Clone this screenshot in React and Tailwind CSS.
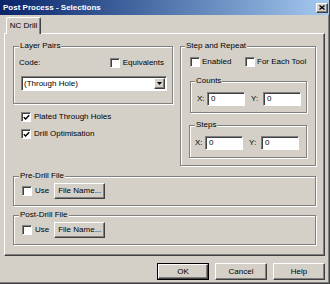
import React from "react";

function Check({ checked }) {
  return (
    <span className="w-[10px] h-[10px] shrink-0 bg-white border border-t-[#808080] border-l-[#808080] border-r-white border-b-white shadow-[inset_1px_1px_0_#404040] flex items-center justify-center">
      {checked && (
        <svg width="7" height="7" viewBox="0 0 7 7">
          <path d="M0.8 3.2 L2.6 5 L6.2 1.2" fill="none" stroke="#000" strokeWidth="1.4" />
        </svg>
      )}
    </span>
  );
}

function Group({ label, labelLeft, className, children }) {
  return (
    <div className={"relative border border-[#808080] shadow-[inset_1px_1px_0_#fff,1px_1px_0_#fff] " + className}>
      <span className={"absolute -top-[6px] px-[1px] bg-[#d4d0c8] leading-[10px] " + labelLeft}>{label}</span>
      {children}
    </div>
  );
}

function Input({ className }) {
  return (
    <div className={"h-[14px] bg-white border border-t-[#808080] border-l-[#808080] border-r-white border-b-white shadow-[inset_1px_1px_0_#404040] flex items-center pl-[3px] " + className}>
      0
    </div>
  );
}

function Btn({ children, className }) {
  return (
    <div className={"bg-[#d4d0c8] border border-t-white border-l-white border-r-[#404040] border-b-[#404040] shadow-[inset_-1px_-1px_0_#808080] flex items-center justify-center " + className}>
      {children}
    </div>
  );
}

export default function App() {
  return (
    <div className="w-[330px] h-[284px] bg-[#d4d0c8] border-r border-b border-[#404040] shadow-[inset_-1px_-1px_0_#808080] flex flex-col text-[8px] leading-none text-black font-['Liberation_Sans',Arial,sans-serif]">
      {/* title bar */}
      <div className="h-[15px] bg-linear-to-r from-[#0a246a] to-[#a6caf0] flex items-center justify-between pl-[3px] pr-[1px] shrink-0">
        <span className="text-white font-bold text-[8px]">Post Process - Selections</span>
        <Btn className="w-[12px] h-[10px]">
          <svg width="6" height="5" viewBox="0 0 6 5">
            <path d="M0.5 0.5 L5.5 4.5 M5.5 0.5 L0.5 4.5" stroke="#000" strokeWidth="1.3" />
          </svg>
        </Btn>
      </div>

      {/* tab */}
      <div className="mt-[2px] h-[16px] pl-[6px] shrink-0">
        <div className="relative z-10 w-[35px] h-[17px] bg-[#d4d0c8] border-t border-l border-white border-r border-r-[#404040] rounded-t-[2px] shadow-[inset_-1px_0_0_#808080] flex items-center justify-center pb-[1px]">
          NC Drill
        </div>
      </div>

      {/* panel */}
      <div className="ml-[4px] w-[321px] h-[223px] shrink-0 border border-t-white border-l-white border-r-[#404040] border-b-[#404040] shadow-[inset_-1px_-1px_0_#808080] pt-[12px] pl-[8px] flex flex-col">
        <div className="flex gap-[7px]">
          {/* left column */}
          <div className="w-[160px] flex flex-col">
            <Group label="Layer Pairs" labelLeft="left-[5px]" className="h-[58px] pt-[11px] pl-[5px] pr-[8px]">
              <div className="flex items-center h-[10px]">
                <span>Code:</span>
                <div className="ml-auto flex items-center gap-[3px]">
                  <Check />
                  <span>Equivalents</span>
                </div>
              </div>
              <div className="mt-[8px] ml-[2px] w-[146px] h-[15px] bg-white border border-t-[#808080] border-l-[#808080] border-r-white border-b-white shadow-[inset_1px_1px_0_#404040] flex items-center pl-[2px] pr-[1px]">
                <span>(Through Hole)</span>
                <Btn className="ml-auto w-[11px] h-[11px]">
                  <svg width="5" height="3" viewBox="0 0 5 3">
                    <path d="M0 0 L5 0 L2.5 3 Z" fill="#000" />
                  </svg>
                </Btn>
              </div>
            </Group>
            <div className="mt-[8px] pl-[8px] flex items-center gap-[3px] h-[10px]">
              <Check checked />
              <span>Plated Through Holes</span>
            </div>
            <div className="mt-[7px] pl-[8px] flex items-center gap-[3px] h-[10px]">
              <Check checked />
              <span>Drill Optimisation</span>
            </div>
          </div>

          {/* right column */}
          <Group label="Step and Repeat" labelLeft="left-[4px]" className="w-[136px] h-[120px] pt-[10px] pl-[9px]">
            <div className="flex items-center h-[10px]">
              <div className="w-[55px] flex items-center gap-[2px]">
                <Check />
                <span>Enabled</span>
              </div>
              <div className="flex items-center gap-[2px]">
                <Check />
                <span>For Each Tool</span>
              </div>
            </div>
            <Group label="Counts" labelLeft="left-[4px]" className="mt-[14px] w-[117px] h-[32px] pt-[10px] pl-[6px]">
              <div className="flex items-center">
                <span className="w-[10px]">X:</span>
                <Input className="w-[38px]" />
                <span className="ml-[6px] w-[12px]">Y:</span>
                <Input className="w-[38px]" />
              </div>
            </Group>
            <Group label="Steps" labelLeft="left-[5px]" className="mt-[12px] -ml-[1px] w-[118px] h-[33px] pt-[10px] pl-[5px]">
              <div className="flex items-center">
                <span className="w-[10px]">X:</span>
                <Input className="w-[38px]" />
                <span className="ml-[6px] w-[12px]">Y:</span>
                <Input className="w-[38px]" />
              </div>
            </Group>
          </Group>
        </div>

        <Group label="Pre-Drill File" labelLeft="left-[5px]" className="mt-[10px] w-[303px] h-[30px] pt-[6px] pl-[8px]">
          <div className="flex items-center h-[16px]">
            <Check />
            <span className="ml-[3px]">Use</span>
            <Btn className="ml-[5px] w-[51px] h-[16px]">File Name...</Btn>
          </div>
        </Group>
        <Group label="Post-Drill File" labelLeft="left-[5px]" className="mt-[9px] w-[303px] h-[30px] pt-[6px] pl-[8px]">
          <div className="flex items-center h-[16px]">
            <Check />
            <span className="ml-[3px]">Use</span>
            <Btn className="ml-[5px] w-[51px] h-[16px]">File Name...</Btn>
          </div>
        </Group>
      </div>

      {/* buttons */}
      <div className="mt-[7px] flex justify-end gap-[6px] pr-[4px]">
        <div className="w-[52px] h-[17px] border border-black">
          <Btn className="w-full h-full">OK</Btn>
        </div>
        <Btn className="w-[52px] h-[17px]">Cancel</Btn>
        <Btn className="w-[52px] h-[17px]">Help</Btn>
      </div>
    </div>
  );
}
